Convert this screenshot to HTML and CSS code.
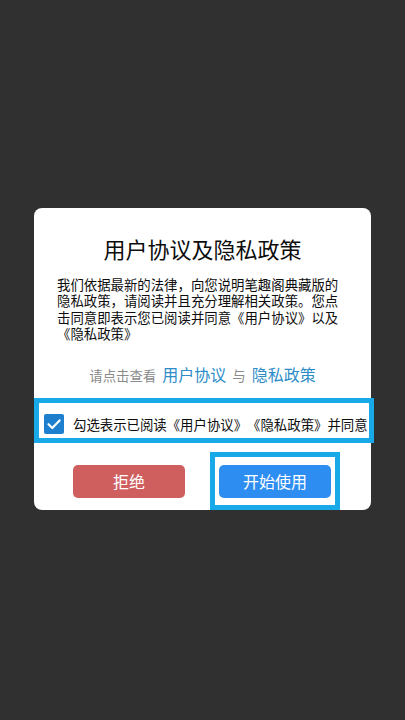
FILE: index.html
```html
<!DOCTYPE html>
<html lang="zh-CN">
<head>
<meta charset="utf-8">
<title>用户协议及隐私政策</title>
<link rel="stylesheet" href="styles.css">
</head>
<body>
<div class="screen">
  <div class="card">
    <h1 class="title">用户协议及隐私政策</h1>
    <p class="body">我们依据最新的法律，向您说明笔趣阁典藏版的隐私政策，请阅读并且充分理解相关政策。您点击同意即表示您已阅读并同意《用户协议》以及《隐私政策》</p>
    <div class="links">
      <span class="muted">请点击查看</span>
      <span class="link">用户协议</span>
      <span class="muted">与</span>
      <span class="link">隐私政策</span>
    </div>
    <div class="check-row">
      <span class="checkbox">
        <svg viewBox="0 0 20 20" width="20" height="20"><path d="M4.5 10.2 L8.3 14 L15.6 6.4" fill="none" stroke="#fff" stroke-width="2.2" stroke-linecap="round" stroke-linejoin="round"/></svg>
      </span>
      <span class="check-text">勾选表示已阅读《用户协议》《隐私政策》并同意</span>
    </div>
    <div class="actions">
      <button class="btn btn-reject">拒绝</button>
      <div class="focus">
        <button class="btn btn-start">开始使用</button>
      </div>
    </div>
  </div>
</div>
</body>
</html>
```

FILE: styles.css
```css
html, body {
  margin: 0;
  padding: 0;
  background: #303030;
}
body {
  font-family: "Noto Sans CJK SC", "Noto Sans", sans-serif;
  text-spacing-trim: space-all;
}
.screen {
  width: 405px;
  height: 720px;
  padding-top: 208px;
  box-sizing: border-box;
}
.card {
  margin-left: 34px;
  width: 337px;
  background: #ffffff;
  border-radius: 8px;
  padding-top: 25px;
  box-sizing: border-box;
}
.title {
  margin: 0;
  font-size: 22px;
  line-height: 30px;
  font-weight: 400;
  color: #0d0d0d;
  text-align: center;
}
.body {
  margin: 13px 0 0 23px;
  width: 288px;
  font-size: 13.4px;
  line-height: 16.3px;
  color: #0d0d0d;
  text-spacing-trim: space-all;
}
.links {
  margin-top: 23px;
  height: 20px;
  display: flex;
  justify-content: center;
  align-items: baseline;
  gap: 6px;
  line-height: 20px;
}
.muted {
  font-size: 13.4px;
  color: #8a8a8a;
}
.link {
  font-size: 16px;
  color: #2e8dc8;
}
.check-row {
  margin-top: 14px;
  margin-right: -3px;
  height: 45px;
  box-sizing: border-box;
  border: 5px solid #18aae8;
  padding: 11px 0 4px 5px;
  display: flex;
  align-items: center;
  gap: 9px;
}
.checkbox {
  width: 20px;
  height: 20px;
  border-radius: 2px;
  background: #1f7fcf;
  display: flex;
  flex: none;
}
.check-text {
  font-size: 13.4px;
  line-height: 20px;
  color: #0d0d0d;
  white-space: nowrap;
  text-spacing-trim: space-all;
}
.actions {
  margin-top: 9px;
  margin-bottom: -1px;
  padding-left: 39px;
  display: flex;
  align-items: center;
  gap: 25px;
}
.focus {
  border: 5px solid #18aae8;
  padding: 8px 4px 7px 4px;
  display: flex;
}
.btn {
  width: 112px;
  height: 33px;
  border: none;
  border-radius: 5px;
  color: #fff;
  font-family: "Noto Sans CJK SC", "Noto Sans", sans-serif;
  font-size: 16px;
  line-height: 33px;
  padding: 0;
}
.btn-reject {
  background: #cf5f5f;
}
.btn-start {
  background: #2d8df0;
}
```
